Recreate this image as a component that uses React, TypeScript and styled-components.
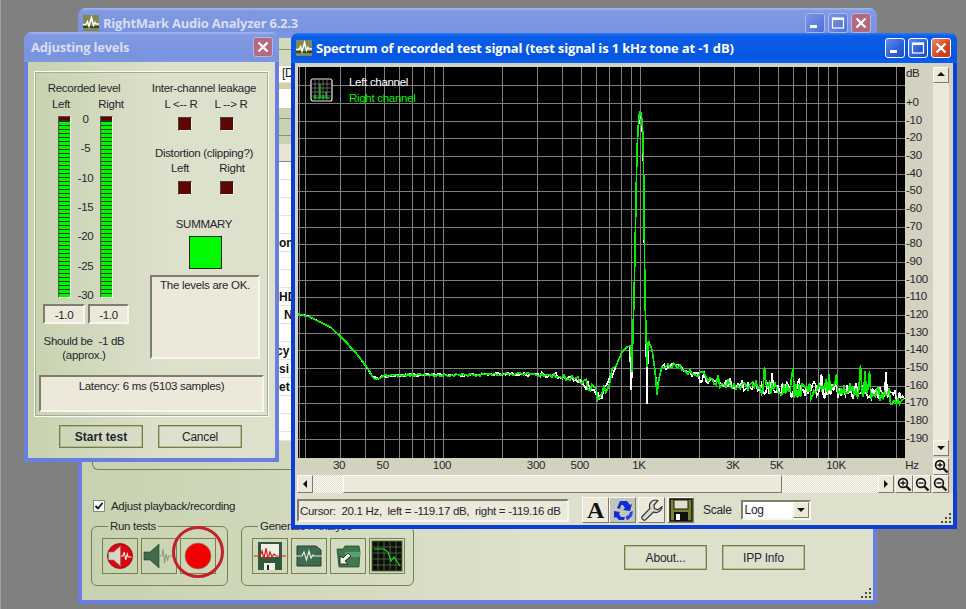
import React from 'react';
import styled, { createGlobalStyle } from 'styled-components';

const Global = createGlobalStyle`
  html, body { margin: 0; padding: 0; background: #808080; }
  * { box-sizing: border-box; }
  #root { width: 966px; height: 609px; }
`;

const UI_FONT = `"Liberation Sans", Arial, sans-serif`;

const Desktop = styled.div`
  position: relative;
  width: 966px;
  height: 609px;
  overflow: hidden;
  background: #808080;
  border-left: 1px solid #a2a2a2;
  font: 11.5px/14px ${UI_FONT};
  letter-spacing: -0.3px;
  color: #26262c;
`;

const Window = styled.div<{ $x: number; $y: number; $w: number; $h: number; $active?: boolean; $z: number }>`
  position: absolute;
  left: ${p => p.$x - 1}px;
  top: ${p => p.$y}px;
  width: ${p => p.$w}px;
  height: ${p => p.$h}px;
  z-index: ${p => p.$z};
  display: flex;
  flex-direction: column;
  border: 4px solid ${p => (p.$active ? '#0a3ed6' : '#6a7de0')};
  border-top: 0;
  border-radius: 8px 8px 0 0;
  background: linear-gradient(90deg, #c7d2b0, #dde0cb 55%);
`;

const TitleBar = styled.div<{ $active?: boolean; $h: number; $pl?: number }>`
  flex: none;
  height: ${p => p.$h}px;
  margin: 0 -4px;
  padding: 0 6px 0 ${p => p.$pl ?? 5}px;
  display: flex;
  align-items: center;
  gap: 4px;
  border-radius: 8px 8px 0 0;
  background: ${p =>
    p.$active
      ? 'linear-gradient(180deg, #2f7bf2 0, #0a5de8 3px, #0656e0 24px, #0a5ff0 100%)'
      : 'linear-gradient(180deg, #a3b6ef 0, #8199e3 3px, #7a93de 24px, #7f97e2 100%)'};
`;

const TitleText = styled.span<{ $active?: boolean }>`
  flex: 1;
  font: 700 13px/18px "Open Sans", sans-serif;
  letter-spacing: ${p => (p.$active ? '-0.15px' : '-0.25px')};
  white-space: nowrap;
  color: ${p => (p.$active ? '#ffffff' : '#d6def4')};
`;

const CaptionButton = styled.div<{ $kind: 'blue' | 'red'; $active?: boolean }>`
  flex: none;
  width: 20px;
  height: 20px;
  display: grid;
  place-items: center;
  border-radius: 3px;
  border: 1px solid ${p => (p.$active ? '#fff' : '#a9b9ee')};
  background: ${p => {
    if (p.$kind === 'red') return p.$active ? 'linear-gradient(135deg,#e88a6c,#d3431f 60%,#c03a18)' : '#b5697f';
    return p.$active ? 'linear-gradient(135deg,#5d8cf0,#2a5fdc 60%,#1f4fc8)' : 'linear-gradient(135deg,#7c96e6,#4f6fd8)';
  }};
`;

const CaptionRow = styled.div`
  flex: none;
  display: flex;
  gap: 3px;
`;

/* ---------- main window contents ---------- */

const MainBody = styled.div`
  flex: 1;
  display: flex;
  flex-direction: column;
  min-height: 0;
  position: relative;
`;

const Band = styled.div<{ $h: number; $bg: string; $line?: string }>`
  flex: none;
  height: ${p => p.$h}px;
  background: ${p => p.$bg};
  border-bottom: ${p => (p.$line ? `1px solid ${p.$line}` : '0')};
`;

const PathField = styled.div`
  flex: none;
  height: 23px;
  padding-left: 200px;
  background: linear-gradient(180deg, #fff 0, #fff 16px, #d8cfa9 17px);
  font: 12px/15px ${UI_FONT};
  color: #20202a;
`;

const TableRow = styled.div<{ $indent?: number; $h?: number }>`
  flex: none;
  height: ${p => p.$h ?? 18}px;
  padding: 2px 0 0 ${p => p.$indent ?? 0}px;
  background: #fff;
  border-bottom: 1px solid #e8e4d6;
  font: 700 12px/15px ${UI_FONT};
  letter-spacing: 0;
  color: #111;
  white-space: nowrap;
  overflow: hidden;
`;

const LowerGroup = styled.div`
  flex: none;
  height: 29px;
  margin-left: 10px;
  border: 1px solid #76824c;
  border-top: 0;
  border-radius: 0 0 6px 6px;
`;

const CheckRow = styled.label`
  flex: none;
  margin: 30px 0 0 11px;
  display: flex;
  align-items: center;
  gap: 6px;
  height: 12px;
`;

const CheckBox = styled.span`
  width: 12px;
  height: 12px;
  background: #fff;
  border: 1px solid #8a8a78;
  display: grid;
  place-items: center;
`;

const ToolRow = styled.div`
  flex: none;
  margin: 7px 0 0 9px;
  display: flex;
  align-items: flex-start;
  gap: 13px;
`;

const Group = styled.fieldset<{ $w: number }>`
  margin: 0;
  padding: 5px 0 0 10px;
  width: ${p => p.$w}px;
  height: 67px;
  border: 1px solid #76824c;
  border-radius: 6px;
  display: flex;
  gap: 3px;
`;

const GroupLegend = styled.legend`
  padding: 0 2px;
  margin-left: 6px;
  font: 11.5px/14px ${UI_FONT};
`;

const IconButton = styled.div`
  flex: none;
  width: 36px;
  height: 36px;
  border: 1px solid #76824c;
  display: grid;
  place-items: center;
`;

const GroupContent = styled.div`
  display: flex;
  gap: 3px;
`;

const FlatButton = styled.div<{ $w: number; $h: number; $bold?: boolean }>`
  flex: none;
  width: ${p => p.$w}px;
  height: ${p => p.$h}px;
  border: 1px solid #74804a;
  box-shadow: inset 0 0 0 0.5px #8f996a;
  display: grid;
  place-items: center;
  font: ${p => (p.$bold ? 700 : 400)} 12px/14px ${UI_FONT};
  letter-spacing: ${p => (p.$bold ? '0.05px' : '-0.2px')};
`;

const InfoButtons = styled.div`
  margin: 26px 0 0 197px;
  display: flex;
  gap: 15px;
`;

const RedRing = styled.div`
  position: absolute;
  left: 90px;
  top: 488px;
  width: 52px;
  height: 52px;
  border: 3px solid #c4202c;
  border-radius: 50%;
`;

const Grip = styled.svg`
  position: absolute;
  right: 1px;
  bottom: 1px;
`;

/* ---------- level dialog ---------- */

const DialogBody = styled.div`
  flex: 1;
  display: flex;
  flex-direction: column;
  padding: 9px 6px 0;
`;

const Frame = styled.div`
  flex: none;
  height: 346px;
  padding: 1px;
  border: 1px solid #fafbf2;
  outline: 1px solid #a7ab93;
  outline-offset: -2px;
  display: flex;
  flex-direction: column;
`;

const Columns = styled.div`
  flex: none;
  display: flex;
  gap: 16px;
`;

const LeftColumn = styled.div`
  flex: none;
  width: 96px;
  padding-top: 8px;
  display: flex;
  flex-direction: column;
`;

const RightColumn = styled.div`
  flex: none;
  width: 112px;
  padding-top: 8px;
  display: flex;
  flex-direction: column;
`;

const Caption = styled.div<{ $mt?: number }>`
  text-align: center;
  margin-top: ${p => p.$mt ?? 0}px;
  white-space: pre;
  height: 14px;
`;

const LabelPair = styled.div<{ $mt?: number; $c: number; $left: number }>`
  display: grid;
  grid-template-columns: repeat(2, ${p => p.$c}px);
  padding-left: ${p => p.$left}px;
  margin-top: ${p => p.$mt ?? 0}px;
  text-align: center;
`;

const MeterGrid = styled.div`
  margin: 5px 0 0 22px;
  display: grid;
  grid-template-columns: 13px 29px 13px;
  height: 182px;
`;

const Meter = styled.div`
  position: relative;
  border: 1px solid;
  border-color: #55554a #f4f5ea #f4f5ea #55554a;
  padding-top: 5px;
  background: linear-gradient(180deg, #5b0505 0 3px, #2c2c20 3px);
`;

const MeterBar = styled.div`
  height: 100%;
  background: repeating-linear-gradient(180deg, #00f500 0 3px, #123a0c 3px 4px);
`;

const Scale = styled.div`
  margin: -4px 0 -6px;
  display: flex;
  flex-direction: column;
  justify-content: space-between;
  align-items: center;
  height: 190px;
`;

const Sunken = styled.div<{ $w?: number; $h: number }>`
  flex: none;
  width: ${p => (p.$w ? `${p.$w}px` : 'auto')};
  height: ${p => p.$h}px;
  background: #ece9da;
  border: 2px solid;
  border-color: #7f7e6c #f6f6ee #f6f6ee #7f7e6c;
  text-align: center;
  padding-top: 2px;
  white-space: pre;
`;

const ValueRow = styled.div`
  margin: 6px 0 0 7px;
  display: flex;
  gap: 3px;
`;

const LedRow = styled.div`
  margin: 6px 0 0 30px;
  display: flex;
  gap: 28px;
`;

const Led = styled.div`
  width: 14px;
  height: 14px;
  background: #5e0505;
  border: 1px solid;
  border-color: #45453a #f4f5ea #f4f5ea #45453a;
`;

const SummaryBox = styled.div`
  margin: 5px 0 0 41px;
  width: 33px;
  height: 33px;
  background: #00fa00;
  border: 1px solid #1a2a10;
`;

const SummaryText = styled(Sunken)`
  margin: 6px 0 0 2px;
  padding-top: 1px;
`;

const LatencyBox = styled(Sunken)`
  margin: 13px 3px 0 3px;
  padding-top: 2px;
`;

const DialogButtons = styled.div`
  margin: 8px 0 0 25px;
  display: flex;
  gap: 15px;
`;

/* ---------- spectrum window ---------- */

const SpectrumBody = styled.div`
  flex: 1;
  position: relative;
  display: flex;
  flex-direction: column;
  min-height: 0;
  background: #dde0cb;
`;

const ChartGrid = styled.div`
  flex: none;
  display: grid;
  grid-template-columns: 607px 28px 16px 4px;
  grid-template-rows: 391px 17px;
  padding: 4px 0 0 3px;
  background: linear-gradient(90deg, #d4d3bf, #d3d1c0);
`;

const Plot = styled.div`
  position: relative;
  background: #000;
`;

const PlotSvg = styled.svg`
  display: block;
`;

const Legend = styled.div`
  position: absolute;
  left: 51px;
  top: 7px;
  font: 11.5px/16px ${UI_FONT};
`;

const LegendLine = styled.div<{ $c: string }>`
  color: ${p => p.$c};
`;

const ThumbIcon = styled.svg`
  position: absolute;
  left: 12px;
  top: 11px;
`;

const DbAxis = styled.div`
  position: relative;
`;

const DbTick = styled.span`
  position: absolute;
  left: 1px;
  font: 11.5px/14px ${UI_FONT};
`;

const FreqAxis = styled.div`
  grid-column: 1 / span 2;
  position: relative;
`;

const FreqTick = styled.span`
  position: absolute;
  top: 0;
  transform: translateX(-50%);
  font: 11.5px/14px ${UI_FONT};
`;

const VScroll = styled.div`
  display: flex;
  flex-direction: column;
  height: 389px;
  background: #ece9da;
`;

const VTrack = styled.div`
  flex: 1;
`;

const Bevel = styled.div<{ $w?: number; $h?: number }>`
  flex: none;
  width: ${p => p.$w ?? 16}px;
  height: ${p => p.$h ?? 16}px;
  display: grid;
  place-items: center;
  background: #ece9da;
  border: 1px solid;
  border-color: #fbfaf4 #7d7c6c #7d7c6c #fbfaf4;
`;

const HRow = styled.div`
  flex: none;
  height: 18px;
  display: flex;
  padding-left: 2px;
  background: #d3d1c0;
`;

const Dither = styled.div<{ $w: number }>`
  flex: none;
  width: ${p => p.$w}px;
  height: 18px;
  background: repeating-conic-gradient(#fbfaf2 0 25%, #e2dfd0 0 50%) 0 0 / 2px 2px;
`;

const HThumb = styled(Bevel)`
  background: #ece9da;
`;

const Gap = styled.div<{ $w: number }>`
  flex: none;
  width: ${p => p.$w}px;
`;

const StatusRow = styled.div`
  flex: none;
  margin: 4px 0 0 2px;
  display: flex;
  align-items: center;
`;

const CursorBox = styled(Sunken)`
  text-align: left;
  padding: 3px 0 0 1px;
  font: 11.5px/14px ${UI_FONT};
`;

const ToolButton = styled.div<{ $pressed?: boolean; $mr: number }>`
  flex: none;
  width: 27px;
  height: 26px;
  margin-right: ${p => p.$mr}px;
  display: grid;
  place-items: center;
  background: ${p => (p.$pressed ? '#c4c3bc' : '#ece9da')};
  border: 1px solid;
  border-color: #fbfaf4 #7d7c6c #7d7c6c #fbfaf4;
`;

const BigA = styled.span`
  font: 700 24px/24px "Liberation Serif", serif;
  color: #111;
`;

const ScaleLabel = styled.span`
  margin: 0 9px 0 9px;
  font: 12px/14px ${UI_FONT};
`;

const SelectBox = styled.div`
  flex: none;
  width: 70px;
  height: 20px;
  display: flex;
  background: #fff;
  border: 2px solid;
  border-color: #7f7e6c #f6f6ee #f6f6ee #7f7e6c;
  font: 12px/16px ${UI_FONT};
  padding-left: 2px;
  justify-content: space-between;
`;

const SelectArrow = styled(Bevel)`
  width: 16px;
  height: 16px;
`;

/* ---------- drawings ---------- */

const AppIcon = () => (
  <svg width="16" height="16" viewBox="0 0 16 16" style={{ flex: 'none' }}>
    <rect width="16" height="16" fill="#7f8a52" />
    <rect y="11" width="16" height="2" fill="#3c4420" />
    <path d="M0 9.5h3l1.5-3 1.5 5 2.5-9 2 8 1.5-3 1 1.5H16" fill="none" stroke="#fff" strokeWidth="1.4" />
  </svg>
);

const GlyphClose = () => (
  <svg width="14" height="14" viewBox="0 0 14 14">
    <path d="M2.5 2.5l9 9M11.5 2.5l-9 9" stroke="#fff" strokeWidth="2.3" />
  </svg>
);
const GlyphMax = () => (
  <svg width="14" height="14" viewBox="0 0 14 14">
    <rect x="1.5" y="2" width="11" height="10" fill="none" stroke="#fff" strokeWidth="1.2" />
    <rect x="1.5" y="2" width="11" height="2" fill="#fff" />
  </svg>
);
const GlyphMin = () => (
  <svg width="14" height="14" viewBox="0 0 14 14">
    <rect x="2" y="9" width="7" height="3" fill="#fff" />
  </svg>
);

const Arrow = ({ dir }: { dir: 'u' | 'd' | 'l' | 'r' }) => {
  const d = { u: 'M1 6h8L5 2z', d: 'M1 3h8L5 7z', l: 'M7 1v8L3 5z', r: 'M3 1v8L7 5z' }[dir];
  return (
    <svg width="10" height="10" viewBox="0 0 10 10">
      <path d={d} fill="#111" />
    </svg>
  );
};

const Magnifier = ({ sign }: { sign: '+' | '-' }) => (
  <svg width="15" height="15" viewBox="0 0 15 15">
    <circle cx="6" cy="6" r="4.4" fill="#f4f4ea" stroke="#111" strokeWidth="1.7" />
    <path d="M9.5 9.5l4 4" stroke="#111" strokeWidth="2.4" />
    <path d={sign === '+' ? 'M3.5 6h5M6 3.5v5' : 'M3.5 6h5'} stroke="#111" strokeWidth="1.3" />
  </svg>
);

const GripMark = ({ color }: { color: string }) => (
  <Grip width="12" height="12" viewBox="0 0 12 12">
    {[[9, 1], [5, 5], [9, 5], [1, 9], [5, 9], [9, 9]].map(([x, y]) => (
      <rect key={`${x}-${y}`} x={x} y={y} width="2" height="2" fill={color} />
    ))}
  </Grip>
);

const SpeakerRed = () => (
  <svg width="30" height="30" viewBox="0 0 30 30">
    <circle cx="15" cy="15" r="12.5" fill="#e00610" stroke="#7a0408" strokeWidth="0.8" />
    <path d="M3.5 11h5l7-6v20l-7-6h-5z" fill="#d8d6c8" stroke="#77776a" strokeWidth="0.6" />
    <path d="M16 15h2l1.2-4 1.6 8 1.4-6 1 3h3.5" fill="none" stroke="#f4f4ea" strokeWidth="1.1" />
  </svg>
);
const SpeakerGreen = () => (
  <svg width="32" height="30" viewBox="0 0 32 30">
    <path d="M1 11h6l9-8v24l-9-8H1z" fill="#3f6b4a" stroke="#26402c" strokeWidth="0.6" />
    <path d="M16 15h3l1-7 1.5 14 1.5-9 1.5 6 1.3-4h5" fill="none" stroke="#8f9c7a" strokeWidth="1.1" />
  </svg>
);
const RecordDot = () => (
  <svg width="30" height="30" viewBox="0 0 30 30">
    <circle cx="15" cy="15" r="13" fill="#f00000" stroke="#8c8a60" strokeWidth="0.6" />
  </svg>
);
const FloppyWave = () => (
  <svg width="32" height="32" viewBox="0 0 32 32">
    <path d="M4 2h24v28H4z" fill="#2f5a3e" />
    <rect x="7" y="4" width="18" height="13" fill="#eef1e6" />
    <rect x="10" y="23" width="11" height="7" fill="#eef1e6" />
    <rect x="13" y="25" width="2" height="5" fill="#222" />
    <path d="M0 16h6l2-5 2 8 2-11 2 11 2-7 2 5 2-3 2 2h10" fill="none" stroke="#e01818" strokeWidth="1.2" />
  </svg>
);
const CardWave = () => (
  <svg width="30" height="30" viewBox="0 0 30 30">
    <path d="M3 5h19l5 4v16H3z" fill="#3f6b4f" stroke="#24402d" />
    <path d="M0 15h8l2-4 2.5 8 2.5-9 2 7 2-3 1 1h9" fill="none" stroke="#e8ebe0" strokeWidth="1.2" />
  </svg>
);
const FolderArrow = () => (
  <svg width="30" height="30" viewBox="0 0 30 30">
    <path d="M4 8h6l2-3h14l1 6-1 15H6z" fill="#3e7a50" stroke="#1f3a26" strokeWidth="0.7" />
    <path d="M12 11h15v5H12z" fill="#5aa070" />
    <path d="M7 15v8h8l-3-3 6-5-3-3-5 5z" fill="#f4f4e4" stroke="#111" strokeWidth="0.8" />
  </svg>
);
const GraphTile = () => (
  <svg width="32" height="32" viewBox="0 0 32 32">
    <rect x="1" y="1" width="30" height="30" fill="#0a0f08" stroke="#5a6a45" />
    {[7, 13, 19, 25].map(v => (
      <path key={v} d={`M${v} 2v28M2 ${v}h28`} stroke="#6c7a56" strokeWidth="0.7" />
    ))}
    <path d="M3 9h10l4 3 3 9 3-4 6 9" fill="none" stroke="#19e619" strokeWidth="1.2" />
  </svg>
);
const Recycle = () => (
  <svg width="24" height="24" viewBox="0 0 24 24">
    <path d="M6 10l3-7h7l3 4 2-1-2 7-7-1 2-2-2-3H10l-1 4z" fill="#0c2fd8" />
    <path d="M3 13l6 1-1 2 2 3h4l-1 3H8l-3-3-2 1z" fill="#0c2fd8" />
    <path d="M22 13l-1 5-4 4-2-1v-3l3-1 1-3z" fill="#2244e8" />
  </svg>
);
const Wrench = () => (
  <svg width="24" height="24" viewBox="0 0 24 24">
    <path d="M15 2a6 6 0 0 0-5 8.4L2.6 18a2.4 2.4 0 0 0 3.4 3.4L13.6 14A6 6 0 0 0 22 8.8l-4 3-3.6-1.3L14 7l3.8-4.4A6 6 0 0 0 15 2z" fill="#d8d8d2" stroke="#333" strokeWidth="1.2" />
  </svg>
);
const Floppy = () => (
  <svg width="24" height="24" viewBox="0 0 24 24">
    <rect x="1" y="1" width="22" height="22" fill="#7a8230" stroke="#1a1a10" strokeWidth="1.6" />
    <rect x="5" y="2" width="14" height="9" fill="#dfe2c8" stroke="#1a1a10" />
    <rect x="5" y="14" width="14" height="9" fill="#101010" />
    <rect x="7" y="16" width="4" height="6" fill="#fff" />
  </svg>
);

/* ---------- spectrum data ---------- */

const PW = 607;
const PH = 391;
const fx = (f: number) => 443 - 298 + 197 * Math.log10(f / 100);
const dy = (db: number) => 103 - 67 - (db / 10) * 17.67;

const FREQS = [20, 30, 40, 50, 60, 70, 80, 90, 100, 200, 300, 400, 500, 600, 700, 800, 900, 1000, 2000, 3000, 4000, 5000, 6000, 7000, 8000, 9000, 10000, 20000];
const DBS = [10, 0, -10, -20, -30, -40, -50, -60, -70, -80, -90, -100, -110, -120, -130, -140, -150, -160, -170, -180, -190];

const BASE: [number, number][] = [
  [298, 314], [310, 317], [330, 327], [345, 341], [360, 358], [375, 379], [385, 376], [420, 375], [470, 375],
  [520, 374], [560, 376], [580, 380], [592, 388], [600, 396], [606, 390], [612, 374],
];
const TAIL: [number, number][] = [
  [662, 367], [677, 366], [687, 372], [700, 376], [720, 382], [760, 388], [800, 391], [850, 391], [880, 393], [905, 401],
];

const rng = (seed: number) => () => {
  seed = (seed * 16807) % 2147483647;
  return seed / 2147483647;
};

const lerp = (t: [number, number][], x: number) => {
  for (let i = 1; i < t.length; i++) {
    if (x <= t[i][0]) {
      const [a, b] = [t[i - 1], t[i]];
      return a[1] + ((b[1] - a[1]) * (x - a[0])) / (b[0] - a[0]);
    }
  }
  return t[t.length - 1][1];
};

const amp = (x: number) => {
  if (x < 370) return 0.3;
  if (x < 540) return 1.6;
  if (x < 585) return 3;
  if (x < 620) return 6;
  if (x < 700) return 3;
  if (x < 780) return 6;
  return 8;
};

const buildCurve = (seed: number, peak: [number, number][], spike: number) => {
  const r = rng(seed);
  const pts: string[] = [];
  const push = (x: number, y: number) => pts.push(`${(x - 298).toFixed(1)},${(y - 67).toFixed(1)}`);
  for (let x = 298; x < 614; x += 2) push(x, lerp(BASE, x) + (r() - 0.5) * 2 * amp(x));
  peak.forEach(([x, y]) => push(x, y));
  for (let x = 664; x <= 905; x += x < 760 ? 2 : 1.5) {
    let y = lerp(TAIL, x) + (r() - 0.5) * 2 * amp(x);
    if (x > 740 && r() < spike) y -= 8 + r() * 14;
    push(x, y);
  }
  return pts.join(' ');
};

const GREEN_PEAK: [number, number][] = [
  [616, 366], [622, 352], [627, 347], [630, 346], [631, 349], [632, 372], [633, 330], [634, 300], [636, 200], [637, 150],
  [638, 130], [639, 115], [640, 112], [641, 113], [642, 120], [643, 137], [643.5, 160], [645, 300], [646, 330], [647, 367],
  [648, 343], [649, 342], [652, 350], [655, 370], [657, 395], [659, 378], [662, 367],
];
const WHITE_PEAK: [number, number][] = [
  [616, 366], [622, 352], [627, 347], [630, 346], [631, 390], [632, 372], [633, 330], [634, 300], [636, 200], [637, 150],
  [638, 130], [640, 113], [642, 122], [643.5, 165], [645, 300], [646, 330], [647, 404], [648, 343], [649, 342], [652, 350],
  [655, 370], [657, 392], [659, 378], [662, 367],
];

const WHITE = buildCurve(12345, WHITE_PEAK, 0.05);
const GREENC = buildCurve(98765, GREEN_PEAK, 0.12);

const FREQ_LABELS: [string, number][] = [
  ['30', 30], ['50', 50], ['100', 100], ['300', 300], ['500', 500], ['1K', 1000], ['3K', 3000], ['5K', 5000], ['10K', 10000],
];
const DB_LABELS: [string, number][] = [
  ['+0', 0], ...[-10, -20, -30, -40, -50, -60, -70, -80, -90, -100, -110, -120, -130, -140, -150, -160, -170, -180, -190].map(
    d => [String(d), d] as [string, number],
  ),
];

const Captions = ({ active, withMinMax }: { active?: boolean; withMinMax: boolean }) => (
  <CaptionRow>
    {withMinMax && (
      <>
        <CaptionButton $kind="blue" $active={active}><GlyphMin /></CaptionButton>
        <CaptionButton $kind="blue" $active={active}><GlyphMax /></CaptionButton>
      </>
    )}
    <CaptionButton $kind="red" $active={active}><GlyphClose /></CaptionButton>
  </CaptionRow>
);

export default function App() {
  return (
    <>
      <Global />
      <Desktop>
        {/* Main analyzer window */}
        <Window $x={78} $y={8} $w={799} $h={596} $z={1}>
          <TitleBar $h={30}>
            <AppIcon />
            <TitleText>RightMark Audio Analyzer 6.2.3</TitleText>
            <Captions withMinMax />
          </TitleBar>
          <MainBody>
            <Band $h={12} $bg="transparent" $line="#8a9468" />
            <Band $h={16} $bg="transparent" />
            <PathField>[D</PathField>
            <Band $h={19} $bg="#fff" />
            <Band $h={11} $bg="#c9d2b0" $line="#8a9468" />
            <Band $h={17} $bg="#c9d2b0" $line="#8a9468" />
            <Band $h={8} $bg="#c9d2b0" />
            <Band $h={18} $bg="#e8e4d6" $line="#8c8a78" />
            <TableRow /><TableRow /><TableRow /><TableRow />
            <TableRow $indent={197}>on</TableRow>
            <TableRow /><TableRow />
            <TableRow $indent={197}>HD</TableRow>
            <TableRow $indent={202}>N</TableRow>
            <TableRow />
            <TableRow $indent={194}>cy</TableRow>
            <TableRow $indent={197}>si</TableRow>
            <TableRow $indent={197}>et</TableRow>
            <TableRow /><TableRow /><TableRow $h={9} />
            <LowerGroup />
            <CheckRow>
              <CheckBox>
                <svg width="10" height="10" viewBox="0 0 10 10">
                  <path d="M1.5 5l2.5 2.5L8.5 2" fill="none" stroke="#111" strokeWidth="1.8" />
                </svg>
              </CheckBox>
              Adjust playback/recording
            </CheckRow>
            <ToolRow>
              <Group $w={137}>
                <GroupLegend>Run tests</GroupLegend>
                <GroupContent>
                  <IconButton><SpeakerRed /></IconButton>
                  <IconButton><SpeakerGreen /></IconButton>
                  <IconButton><RecordDot /></IconButton>
                </GroupContent>
              </Group>
              <Group $w={173}>
                <GroupLegend>Generate / Analyse</GroupLegend>
                <GroupContent>
                  <IconButton><FloppyWave /></IconButton>
                  <IconButton><CardWave /></IconButton>
                  <IconButton><FolderArrow /></IconButton>
                  <IconButton><GraphTile /></IconButton>
                </GroupContent>
              </Group>
              <InfoButtons>
                <FlatButton $w={83} $h={25}>About...</FlatButton>
                <FlatButton $w={83} $h={25}>IPP Info</FlatButton>
              </InfoButtons>
            </ToolRow>
            <RedRing />
            <GripMark color="#4a5030" />
          </MainBody>
        </Window>

        {/* Adjusting levels dialog */}
        <Window $x={24} $y={32} $w={255} $h={430} $z={2}>
          <TitleBar $h={30} $pl={7}>
            <TitleText>Adjusting levels</TitleText>
            <Captions withMinMax={false} />
          </TitleBar>
          <DialogBody>
            <Frame>
              <Columns>
                <LeftColumn>
                  <Caption>Recorded level</Caption>
                  <LabelPair $mt={2} $c={50} $left={0}>
                    <span>Left</span>
                    <span>Right</span>
                  </LabelPair>
                  <MeterGrid>
                    <Meter><MeterBar /></Meter>
                    <Scale>
                      {['0', '-5', '-10', '-15', '-20', '-25', '-30'].map(v => <span key={v}>{v}</span>)}
                    </Scale>
                    <Meter><MeterBar /></Meter>
                  </MeterGrid>
                  <ValueRow>
                    <Sunken $w={42} $h={20}>-1.0</Sunken>
                    <Sunken $w={41} $h={20}>-1.0</Sunken>
                  </ValueRow>
                  <Caption $mt={10}>{'Should be  -1 dB'}</Caption>
                  <Caption>(approx.)</Caption>
                </LeftColumn>
                <RightColumn>
                  <Caption>Inter-channel leakage</Caption>
                  <LabelPair $mt={2} $c={50} $left={8}>
                    <span>L &lt;-- R</span>
                    <span>L --&gt; R</span>
                  </LabelPair>
                  <LedRow><Led /><Led /></LedRow>
                  <Caption $mt={15}>Distortion (clipping?)</Caption>
                  <LabelPair $mt={1} $c={52} $left={6}>
                    <span>Left</span>
                    <span>Right</span>
                  </LabelPair>
                  <LedRow><Led /><Led /></LedRow>
                  <Caption $mt={22}>SUMMARY</Caption>
                  <SummaryBox />
                  <SummaryText $w={110} $h={84}>The levels are OK.</SummaryText>
                </RightColumn>
              </Columns>
              <LatencyBox $h={37}>Latency: 6 ms (5103 samples)</LatencyBox>
            </Frame>
            <DialogButtons>
              <FlatButton $w={84} $h={23} $bold>Start test</FlatButton>
              <FlatButton $w={84} $h={23}>Cancel</FlatButton>
            </DialogButtons>
          </DialogBody>
        </Window>

        {/* Spectrum window */}
        <Window $x={291} $y={33} $w={666} $h={496} $active $z={3}>
          <TitleBar $active $h={30}>
            <AppIcon />
            <TitleText $active>Spectrum of recorded test signal (test signal is 1 kHz tone at -1 dB)</TitleText>
            <Captions active withMinMax />
          </TitleBar>
          <SpectrumBody>
            <ChartGrid>
              <Plot>
                <PlotSvg width={PW} height={PH} viewBox={`0 0 ${PW} ${PH}`}>
                  <path
                    d={FREQS.map(f => `M${Math.round(fx(f))} 0V${PH}`).join('')}
                    stroke="#808080"
                    shapeRendering="crispEdges"
                  />
                  <path d="M1 0V391" stroke="#808080" shapeRendering="crispEdges" />
                  <path
                    d={DBS.map(d => `M0 ${Math.round(dy(d))}H${PW}`).join('')}
                    stroke="#808080"
                    shapeRendering="crispEdges"
                  />
                  <polyline points={WHITE} fill="none" stroke="#fff" strokeWidth="1.7" shapeRendering="crispEdges" />
                  <polyline points={GREENC} fill="none" stroke="#00f000" strokeWidth="1.7" shapeRendering="crispEdges" />
                </PlotSvg>
                <ThumbIcon width="23" height="24" viewBox="0 0 23 24">
                  <rect x="1" y="1" width="21" height="22" rx="2" fill="#000" stroke="#eee" strokeWidth="1.2" />
                  {[5, 9, 13, 17].map(v => (
                    <path key={v} d={`M${v} 2v20M2 ${v + 1}h19`} stroke="#777" strokeWidth="0.8" />
                  ))}
                  <path d="M3 20h17M5 20v-3M10 20V6M13 20v-3M16 20v-6" stroke="#19e619" strokeWidth="1.2" fill="none" />
                </ThumbIcon>
                <Legend>
                  <LegendLine $c="#fff">Left channel</LegendLine>
                  <LegendLine $c="#00f000">Right channel</LegendLine>
                </Legend>
              </Plot>
              <DbAxis>
                <DbTick style={{ top: -1 }}>dB</DbTick>
                {DB_LABELS.map(([t, d]) => (
                  <DbTick key={t} style={{ top: dy(d) - 8 }}>{t}</DbTick>
                ))}
              </DbAxis>
              <VScroll>
                <Bevel><Arrow dir="u" /></Bevel>
                <VTrack />
                <Bevel><Arrow dir="d" /></Bevel>
              </VScroll>
              <div />
              <FreqAxis>
                {FREQ_LABELS.map(([t, f]) => (
                  <FreqTick key={t} style={{ left: fx(f) - 1 }}>{t}</FreqTick>
                ))}
                <FreqTick style={{ left: 614 }}>Hz</FreqTick>
              </FreqAxis>
              <Bevel $h={17}><Magnifier sign="+" /></Bevel>
            </ChartGrid>
            <HRow>
              <Bevel $h={18}><Arrow dir="l" /></Bevel>
              <Dither $w={30} />
              <HThumb $w={439} $h={18} />
              <Dither $w={96} />
              <Bevel $h={18}><Arrow dir="r" /></Bevel>
              <Gap $w={1} />
              <Bevel $w={18} $h={18}><Magnifier sign="+" /></Bevel>
              <Bevel $w={18} $h={18}><Magnifier sign="-" /></Bevel>
              <Gap $w={1} />
              <Bevel $w={17} $h={18}><Magnifier sign="-" /></Bevel>
            </HRow>
            <StatusRow>
              <CursorBox $w={272} $h={23}>{'Cursor:  20.1 Hz,  left = -119.17 dB,  right = -119.16 dB'}</CursorBox>
              <Gap $w={13} />
              <ToolButton $mr={0}><BigA>A</BigA></ToolButton>
              <ToolButton $mr={2} $pressed><Recycle /></ToolButton>
              <ToolButton $mr={2}><Wrench /></ToolButton>
              <ToolButton $mr={0}><Floppy /></ToolButton>
              <ScaleLabel>Scale</ScaleLabel>
              <SelectBox>
                Log
                <SelectArrow><Arrow dir="d" /></SelectArrow>
              </SelectBox>
            </StatusRow>
            <GripMark color="#4a5030" />
          </SpectrumBody>
        </Window>
      </Desktop>
    </>
  );
}
